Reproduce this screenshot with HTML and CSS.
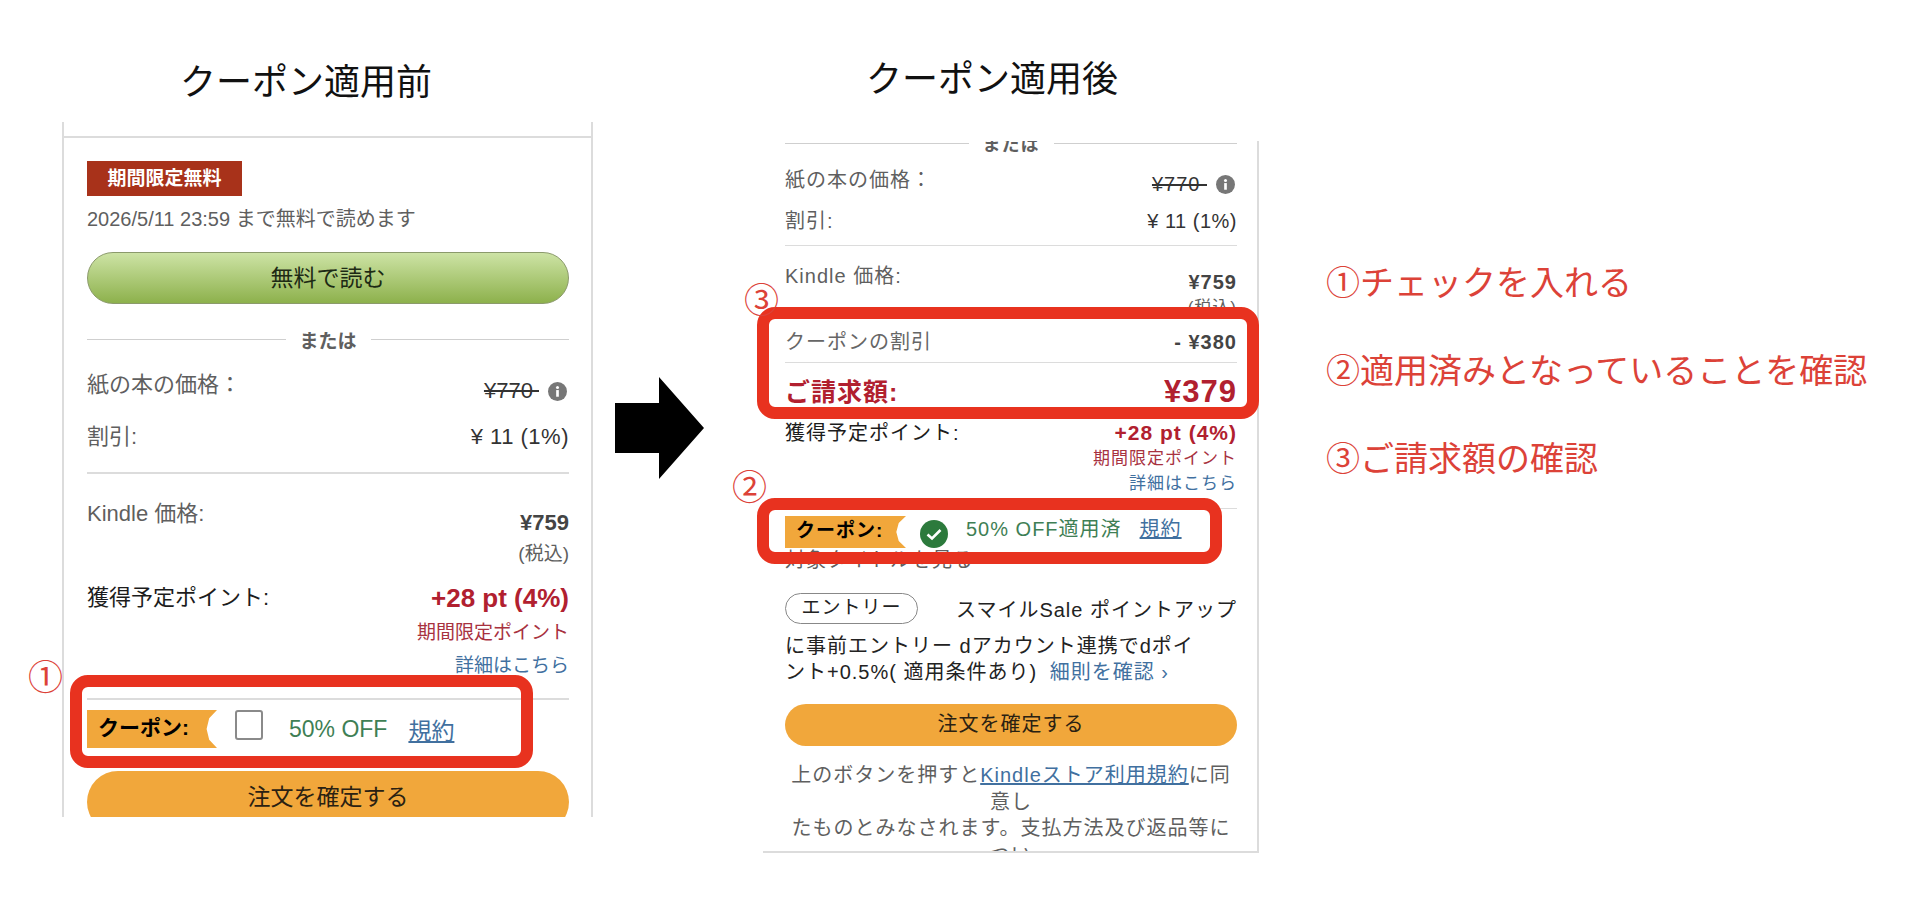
FILE: index.html
```html
<!DOCTYPE html>
<html lang="ja">
<head>
    <meta charset="UTF-8">
    <meta name="viewport" content="width=device-width, initial-scale=1.0">
    <title>クーポンの適用手順</title>
    <link rel="stylesheet" href="styles.css">
</head>
<body>
    <div class="slide">
        <!-- 適用前 -->
        <div class="col col-before">
            <h2 class="col-title">クーポン適用前</h2>
            <div class="panel">
                <div class="card">
                    <div class="card-head"></div>
                    <span class="free-badge">期間限定無料</span>
                    <p class="free-date">2026/5/11 23:59 まで無料で読めます</p>
                    <div class="free-button">無料で読む</div>
                    <div class="or-line"><span>または</span></div>
                    <div class="row row-paper">
                        <span>紙の本の価格：</span>
                        <span class="list-price"><s>¥770&nbsp;</s>
                            <svg class="info" viewBox="0 0 20 20"><circle cx="10" cy="10" r="10" fill="#777"/><rect x="8.6" y="8.5" width="2.8" height="7" fill="#fff"/><circle cx="10" cy="5.8" r="1.6" fill="#fff"/></svg>
                        </span>
                    </div>
                    <div class="row row-discount">
                        <span>割引:</span>
                        <span class="value-wide">¥ 11 (1%)</span>
                    </div>
                    <hr class="rule rule-a">
                    <div class="row row-kindle">
                        <span>Kindle 価格:</span>
                        <span class="stack">
                            <b class="price">¥759</b>
                            <small>(税込)</small>
                        </span>
                    </div>
                    <div class="row row-point">
                        <span class="dark">獲得予定ポイント:</span>
                        <span class="stack">
                            <b class="point">+28 pt (4%)</b>
                            <small class="limited">期間限定ポイント</small>
                            <small class="link">詳細はこちら</small>
                        </span>
                    </div>
                    <hr class="rule rule-b">
                    <div class="coupon">
                        <span class="ribbon">クーポン:</span>
                        <span class="checkbox"></span>
                        <span class="off">50% OFF</span>
                        <a class="terms">規約</a>
                    </div>
                    <div class="order-button">注文を確定する</div>
                </div>
                <div class="frame frame-1"></div>
                <span class="num num-1">①</span>
            </div>
        </div>

        <svg class="arrow" viewBox="0 0 89 102"><polygon points="0,26 44,26 44,0 89,51 44,102 44,76 0,76" fill="#000"/></svg>

        <!-- 適用後 -->
        <div class="col col-after">
            <h2 class="col-title">クーポン適用後</h2>
            <div class="panel">
                <div class="card card-after">
                    <div class="or-line"><span>または</span></div>
                    <div class="row row-paper">
                        <span>紙の本の価格：</span>
                        <span class="list-price"><s>¥770&nbsp;</s>
                            <svg class="info" viewBox="0 0 20 20"><circle cx="10" cy="10" r="10" fill="#777"/><rect x="8.6" y="8.5" width="2.8" height="7" fill="#fff"/><circle cx="10" cy="5.8" r="1.6" fill="#fff"/></svg>
                        </span>
                    </div>
                    <div class="row row-discount">
                        <span>割引:</span>
                        <span class="value-wide">¥ 11 (1%)</span>
                    </div>
                    <hr class="rule rule-a">
                    <div class="row row-kindle">
                        <span>Kindle 価格:</span>
                        <span class="stack">
                            <b class="price">¥759</b>
                            <small>(税込)</small>
                        </span>
                    </div>
                    <div class="row row-cut">
                        <span>クーポンの割引</span>
                        <b class="price">- ¥380</b>
                    </div>
                    <hr class="rule rule-c">
                    <div class="row row-total">
                        <span>ご請求額:</span>
                        <span class="total">¥379</span>
                    </div>
                    <div class="row row-point">
                        <span class="dark">獲得予定ポイント:</span>
                        <span class="stack">
                            <b class="point">+28 pt (4%)</b>
                            <small class="limited">期間限定ポイント</small>
                            <small class="link">詳細はこちら</small>
                        </span>
                    </div>
                    <hr class="rule rule-d">
                    <div class="coupon">
                        <span class="ribbon">クーポン:</span>
                        <svg class="check" viewBox="0 0 28 28"><circle cx="14" cy="14" r="14" fill="#2c7a3c"/><path d="M7.5 14.5l4.5 4 8.5-8.5" fill="none" stroke="#fff" stroke-width="2.6"/></svg>
                        <span class="off">50% OFF適用済</span>
                        <a class="terms">規約</a>
                    </div>
                    <p class="title-link">対象タイトルを見る</p>
                    <div class="entry">
                        <span class="pill">エントリー</span>
                        <span>スマイルSale ポイントアップ</span>
                    </div>
                    <p class="entry-text">に事前エントリー dアカウント連携でdポイ<br>ント+0.5%( 適用条件あり) <a class="rules-link">細則を確認 ›</a></p>
                    <div class="order-button">注文を確定する</div>
                    <p class="legal">上のボタンを押すと<a>Kindleストア利用規約</a>に同意し<br>たものとみなされます。支払方法及び返品等につい<br>ては<a>こちら</a>。</p>
                </div>
                <div class="frame frame-3"></div>
                <div class="frame frame-2"></div>
                <span class="num num-3">③</span>
                <span class="num num-2">②</span>
            </div>
        </div>

        <!-- 手順メモ -->
        <ol class="notes">
            <li>①チェックを入れる</li>
            <li>②適用済みとなっていることを確認</li>
            <li>③ご請求額の確認</li>
        </ol>
    </div>
</body>
</html>
```

FILE: styles.css
```css
:root {
    --frame-red: #e8321f;
    --note-red: #dc4238;
    --orange: #f1a73b;
    --rule: #dcdcdc;
    --gray: #5f5f5f;
    --crimson: #b1202f;
    --green: #3f7f55;
    --blue: #41709f;
}

* {
    margin: 0;
    padding: 0;
    box-sizing: border-box;
}

body {
    background-color: #fff;
    color: #222;
    font-family: "Liberation Sans", "Noto Sans CJK JP", sans-serif;
    height: 905px;
    overflow: hidden;
}

.slide {
    display: flex;
    align-items: flex-start;
    padding-left: 62px;
}

.col-before {
    width: 531px;
    padding-top: 58px;
}

.col-after {
    width: 496px;
    margin-left: 59px;
    padding-top: 55px;
}

.col-title {
    font-size: 36px;
    font-weight: 400;
    line-height: 50px;
    color: #111;
}

.col-before .col-title {
    padding-left: 118px;
    margin-bottom: 14px;
}

.col-after .col-title {
    padding-left: 103px;
    margin-bottom: 36px;
}

.panel {
    position: relative;
}

.card {
    height: 695px;
    overflow: hidden;
    border-left: 2px solid var(--rule);
    border-right: 2px solid var(--rule);
    padding: 0 22px 0 23px;
    font-size: 22px;
    color: var(--gray);
}

.card-head {
    height: 16px;
    margin: 0 -23px 23px;
    border-bottom: 2px solid var(--rule);
    margin-right: -22px;
}

.free-badge {
    display: block;
    width: 155px;
    height: 35px;
    line-height: 35px;
    text-align: center;
    background-color: #a8321a;
    color: #fff;
    font-size: 19px;
    font-weight: bold;
}

.free-date {
    margin-top: 7px;
    line-height: 32px;
    font-size: 20px;
}

.free-button {
    margin-top: 17px;
    height: 52px;
    line-height: 50px;
    text-align: center;
    border: 1px solid #8b9a6b;
    border-radius: 26px;
    background: linear-gradient(#cde3a5, #8db14c);
    color: #1d2a14;
    font-size: 23px;
}

.or-line {
    display: flex;
    align-items: center;
    gap: 14px;
    margin-top: 20px;
    height: 30px;
    font-size: 19px;
    font-weight: bold;
}

.or-line::before,
.or-line::after {
    content: "";
    flex: 1;
    height: 1px;
    background-color: #cfcfcf;
}

.row {
    display: flex;
    justify-content: space-between;
    align-items: flex-start;
    line-height: 30px;
}

.row-paper {
    margin-top: 16px;
}

.list-price {
    display: flex;
    align-items: center;
    gap: 9px;
    margin-top: 6px;
    padding-right: 2px;
    color: #333;
}

.info {
    width: 19px;
    height: 19px;
}

.row-discount {
    margin-top: 16px;
}

.value-wide {
    color: #333;
    letter-spacing: 0.5px;
}

.rule {
    border: 0;
    height: 2px;
    background-color: var(--rule);
}

.rule-a {
    margin-top: 20px;
}

.row-kindle {
    margin-top: 25px;
}

.stack {
    display: flex;
    flex-direction: column;
    align-items: flex-end;
}

.stack small {
    font-size: 19px;
}

.price {
    color: #444;
}

.row-kindle .price {
    margin-top: 9px;
}

.row-kindle small {
    margin-top: 1px;
}

.row-point {
    margin-top: 14px;
}

.dark {
    color: #1c1c1c;
}

.point {
    color: var(--crimson);
    font-size: 26px;
}

.limited {
    margin-top: 5px;
    color: #a8323f;
}

.link {
    margin-top: 3px;
    color: var(--blue);
}

.rule-b {
    margin-top: 17px;
}

.coupon {
    display: flex;
    align-items: center;
    margin-top: 10px;
    height: 38px;
    font-size: 23px;
}

.ribbon {
    width: 130px;
    height: 38px;
    line-height: 36px;
    padding-left: 11px;
    background-color: var(--orange);
    color: #000;
    font-size: 21px;
    font-weight: bold;
    clip-path: polygon(0 0, 100% 0, 94% 22%, 92% 50%, 94% 78%, 100% 100%, 0 100%);
}

.checkbox {
    width: 28px;
    height: 30px;
    margin: -8px 0 0 18px;
    border: 2px solid #8a8a8a;
    border-radius: 3px;
}

.off {
    margin-left: 26px;
    color: var(--green);
}

.terms {
    margin-left: 21px;
    color: var(--blue);
    text-decoration: underline;
}

.order-button {
    margin-top: 23px;
    height: 62px;
    line-height: 53px;
    text-align: center;
    border-radius: 31px;
    background-color: var(--orange);
    color: #2a2112;
    font-size: 23px;
}

.frame {
    position: absolute;
    border: 12px solid var(--frame-red);
    border-radius: 18px;
}

.frame-1 {
    left: 8px;
    top: 553px;
    width: 463px;
    height: 93px;
}

.num {
    position: absolute;
    color: var(--note-red);
    font-size: 35px;
    line-height: 40px;
}

.num-1 {
    left: -34px;
    top: 536px;
}

/* 適用後の料金欄 */
.arrow {
    width: 89px;
    height: 102px;
    margin: 377px 0 0 22px;
    flex-shrink: 0;
}

.card-after {
    height: 712px;
    border-left: 0;
    border-bottom: 2px solid var(--rule);
    padding: 0 20px 0 22px;
    font-size: 20px;
    letter-spacing: 1px;
}

.card-after .or-line {
    margin-top: -10px;
    height: 24px;
    font-size: 18px;
}

.card-after .row {
    line-height: 26px;
}

.card-after .row-paper {
    margin-top: 12px;
}

.card-after .list-price {
    margin-top: 4px;
}

.card-after .row-discount {
    margin-top: 11px;
}

.card-after .rule-a {
    margin-top: 11px;
    height: 1px;
}

.card-after .row-kindle {
    margin-top: 17px;
}

.card-after .row-kindle .price {
    margin-top: 6px;
}

.card-after .stack small {
    font-size: 17px;
    line-height: 24px;
}

.row-cut {
    margin-top: 9px;
    color: #666;
}

.rule-c {
    margin-top: 7px;
    height: 1px;
}

.row-total {
    margin-top: 12px;
    align-items: center;
    color: var(--crimson);
    font-size: 25px;
    font-weight: bold;
}

.card-after .row-total {
    line-height: 34px;
}

.total {
    font-size: 31px;
}

.card-after .row-point {
    margin-top: 11px;
}

.card-after .point {
    font-size: 21px;
}

.card-after .limited {
    margin-top: 1px;
}

.card-after .link {
    margin-top: 1px;
}

.rule-d {
    margin-top: 12px;
    height: 1px;
}

.card-after .coupon {
    margin-top: 7px;
    height: 32px;
    font-size: 20px;
}

.card-after .ribbon {
    width: 121px;
    height: 32px;
    line-height: 29px;
    font-size: 19px;
}

.check {
    width: 28px;
    height: 28px;
    margin: 4px 0 0 14px;
}

.card-after .off {
    margin: -9px 0 0 18px;
}

.card-after .terms {
    margin: -9px 0 0 18px;
}

.title-link {
    line-height: 24px;
    margin-top: 0;
}

.entry {
    display: flex;
    align-items: center;
    justify-content: space-between;
    margin-top: 21px;
    color: #222;
}

.pill {
    width: 133px;
    height: 31px;
    line-height: 28px;
    text-align: center;
    border: 1.5px solid #888;
    border-radius: 16px;
    font-size: 19px;
}

.entry-text {
    margin-top: 9px;
    line-height: 26px;
    color: #222;
}

.rules-link {
    color: var(--blue);
    margin-left: 6px;
}

.card-after .order-button {
    margin-top: 19px;
    height: 42px;
    line-height: 40px;
    border-radius: 21px;
    font-size: 20px;
}

.legal {
    margin-top: 16px;
    line-height: 26.5px;
    text-align: center;
    color: var(--gray);
}

.legal a {
    color: var(--blue);
    text-decoration: underline;
}

.frame-3 {
    left: -6px;
    top: 166px;
    width: 502px;
    height: 112px;
}

.frame-2 {
    left: -6px;
    top: 357px;
    width: 465px;
    height: 66px;
}

.num-3 {
    left: -19px;
    top: 140px;
}

.num-2 {
    left: -31px;
    top: 327px;
}

/* 右側のメモ */
.notes {
    list-style: none;
    display: flex;
    flex-direction: column;
    gap: 38px;
    margin: 258px 0 0 67px;
    color: var(--note-red);
    font-size: 34px;
    line-height: 50px;
    white-space: nowrap;
}
```
